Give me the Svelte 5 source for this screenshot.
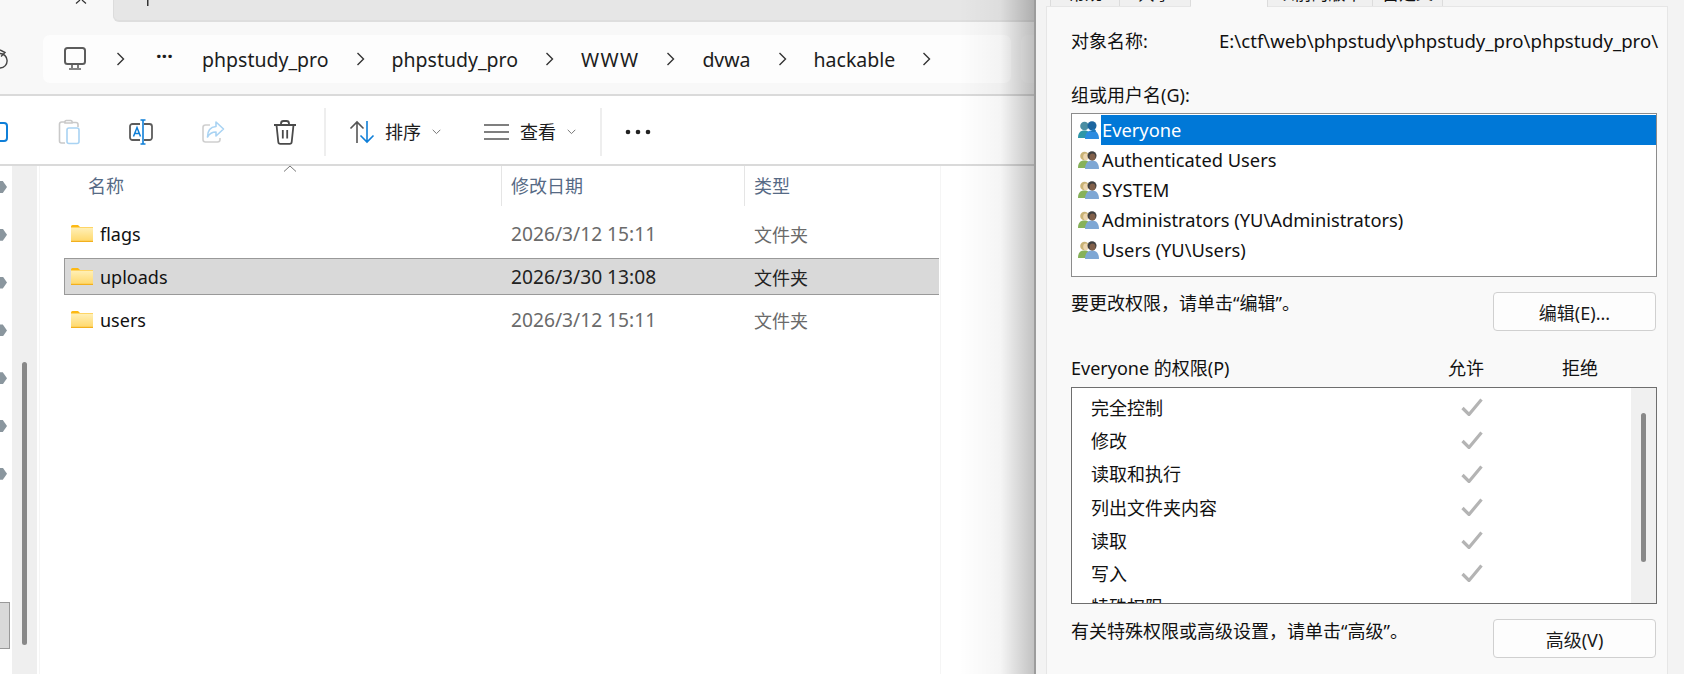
<script>
  const crumbs = [
    { label: 'phpstudy_pro', ls: 0 },
    { label: 'phpstudy_pro', ls: 0 },
    { label: 'WWW', ls: 1.3 },
    { label: 'dvwa', ls: 0 },
    { label: 'hackable', ls: 0 }
  ];
  const files = [
    { name: 'flags', date: '2026/3/12 15:11' },
    { name: 'uploads', date: '2026/3/30 13:08', selected: true },
    { name: 'users', date: '2026/3/12 15:11' }
  ];
  const navTips = [0, 1, 2, 3, 4, 5, 6];
  const tabs = [
    { label: '常规', w: 70 },
    { label: '共享', w: 71 },
    { label: '安全', w: 77, active: true },
    { label: '以前的版本', w: 105 },
    { label: '自定义', w: 70 }
  ];
  const users = [
    { name: 'Everyone', selected: true },
    { name: 'Authenticated Users' },
    { name: 'SYSTEM' },
    { name: 'Administrators (YU\\Administrators)' },
    { name: 'Users (YU\\Users)' }
  ];
  const perms = [
    { name: '完全控制', ok: true },
    { name: '修改', ok: true },
    { name: '读取和执行', ok: true },
    { name: '列出文件夹内容', ok: true },
    { name: '读取', ok: true },
    { name: '写入', ok: true },
    { name: '特殊权限' }
  ];
</script>

<div class="root">
  <section class="explorer">
    <div class="titlebar">
      <svg class="close" width="12" height="4" viewBox="0 0 12 4"><path d="M1 3.500 5 0M11 3.500 7 0" fill="none" stroke="#333" stroke-width="1.200"/></svg>
      <div class="strip">
        <svg class="plus" width="2" height="6" viewBox="0 0 2 6"><rect width="1.500" height="6" fill="#333"/></svg>
      </div>
    </div>

    <div class="address">
      <svg class="refresh" width="8" height="22" viewBox="0 0 8 22"><path d="M0 4.500A7 7 0 0 1 7 11 7 7 0 0 1 0 19M0 1 5 3.500 1 7.500" fill="none" stroke="#444" stroke-width="1.400"/></svg>
      <div class="bar">
        <svg class="monitor" width="24" height="24" viewBox="0 0 24 24"><rect x="2" y="1" width="20" height="16" rx="2.500" fill="none" stroke="#5c5c5c" stroke-width="2"/><path d="M9 17.500V21M15 17.500V21M6 22h12" fill="none" stroke="#5c5c5c" stroke-width="1.600"/></svg>
        <svg class="chev" width="9" height="16" viewBox="0 0 9 16"><path d="M1.500 2 7.500 8 1.500 14" fill="none" stroke="#333" stroke-width="1.400"/></svg>
        <span class="dots">···</span>
        {#each crumbs as c}
          <span class="crumb" style="letter-spacing:{c.ls}px">{c.label}</span>
          <svg class="chev" width="9" height="16" viewBox="0 0 9 16"><path d="M1.500 2 7.500 8 1.500 14" fill="none" stroke="#333" stroke-width="1.400"/></svg>
        {/each}
      </div>
      <div class="search"></div>
    </div>

    <div class="toolbar">
      <div class="tool">
        <svg width="24" height="24" viewBox="0 0 24 24"><rect x="2" y="3" width="20" height="18" rx="3" fill="none" stroke="#0f7fd8" stroke-width="2"/></svg>
      </div>
      <div class="tool">
        <svg width="24" height="26" viewBox="0 0 24 26"><path d="M8 3H4.500A2 2 0 0 0 2.500 5v17a2 2 0 0 0 2 2H8" fill="none" stroke="#c9c9c9" stroke-width="1.600"/><path d="M8 3.500A1.500 1.500 0 0 1 9.500 1.500h4A1.500 1.500 0 0 1 15 3.500V4H8zM15 3.500h4a2 2 0 0 1 2 2V8" fill="none" stroke="#c9c9c9" stroke-width="1.600"/><rect x="10" y="9" width="12" height="15.500" rx="2" fill="none" stroke="#a9d3f3" stroke-width="1.600"/></svg>
      </div>
      <div class="tool">
        <svg width="24" height="26" viewBox="0 0 24 26"><path d="M15 5h5.500a2.500 2.500 0 0 1 2.500 2.500v11a2.500 2.500 0 0 1-2.500 2.500H15M11 5H3.500A2.500 2.500 0 0 0 1 7.500v11A2.500 2.500 0 0 0 3.500 21H11" fill="none" stroke="#5c5c5c" stroke-width="1.800"/><path d="M4.500 17.500 8 8.500 11.500 17.500M5.800 14.500h4.500" fill="none" stroke="#0f7fd8" stroke-width="1.500"/><path d="M14 1v24M11.500 1h5M11.500 25h5" fill="none" stroke="#0f7fd8" stroke-width="1.600"/></svg>
      </div>
      <div class="tool">
        <svg width="24" height="26" viewBox="0 0 24 26"><path d="M9 6H4.500A2.500 2.500 0 0 0 2 8.500v12A2.500 2.500 0 0 0 4.500 23h12a2.500 2.500 0 0 0 2.500-2.500V19" fill="none" stroke="#cfcfcf" stroke-width="1.600"/><path d="M15 3l7.500 7-7.500 7v-4c-4 0-6.500 1.500-8.500 5 0-6 3-10 8.500-10.500z" fill="none" stroke="#a9d3f3" stroke-width="1.600" stroke-linejoin="round"/></svg>
      </div>
      <div class="tool">
        <svg width="24" height="26" viewBox="0 0 24 26"><path d="M1 6h22M8 6V4.500A2.500 2.500 0 0 1 10.500 2h3A2.500 2.500 0 0 1 16 4.500V6M3.500 6l1.800 17a2 2 0 0 0 2 1.800h9.400a2 2 0 0 0 2-1.800L20.500 6M9.800 11v8.500M14.200 11v8.500" fill="none" stroke="#4a4a4a" stroke-width="1.800"/></svg>
      </div>
      <i class="sep first"></i>
      <svg class="sort" width="26" height="26" viewBox="0 0 26 26"><path d="M8 24V3M1.500 9.500 8 3l6.500 6.500" fill="none" stroke="#555" stroke-width="1.600"/><path d="M18 2v21M11.500 16.500 18 23l6.500-6.500" fill="none" stroke="#0f7fd8" stroke-width="1.600"/></svg>
      <span class="tlabel sortl">排序</span>
      <svg class="down" width="9" height="6" viewBox="0 0 9 6"><path d="M.7.8 4.500 4.600 8.300.8" fill="none" stroke="#777" stroke-width="1"/></svg>
      <svg class="lines" width="25" height="18" viewBox="0 0 25 18"><path d="M0 2h25M0 9h25M0 16h25" stroke="#555" stroke-width="1.700"/></svg>
      <span class="tlabel viewl">查看</span>
      <svg class="down" width="9" height="6" viewBox="0 0 9 6"><path d="M.7.8 4.500 4.600 8.300.8" fill="none" stroke="#777" stroke-width="1"/></svg>
      <i class="sep second"></i>
      <svg class="more" width="26" height="6" viewBox="0 0 26 6"><circle cx="3" cy="3" r="2.300" fill="#222"/><circle cx="13" cy="3" r="2.300" fill="#222"/><circle cx="23" cy="3" r="2.300" fill="#222"/></svg>
    </div>

    <div class="body">
      <div class="nav">
        <div class="tips">
          {#each navTips as t (t)}
            <i class="tip"></i>
          {/each}
        </div>
        <div class="navsel"></div>
      </div>
      <div class="track"><i class="thumb"></i></div>
      <div class="list">
        <div class="head">
          <svg class="caret" width="14" height="7" viewBox="0 0 14 7"><path d="M1 6.500 7 1l6 5.500" fill="none" stroke="#777" stroke-width="1"/></svg>
          <span class="h name">名称</span>
          <span class="h date">修改日期</span>
          <span class="h type">类型</span>
        </div>
        {#each files as f}
          <div class="row" class:selected={f.selected}>
            <svg class="folder" width="22" height="17" viewBox="0 0 22 17">
              <defs><linearGradient id="fg" x1="0" y1="0" x2="0" y2="1"><stop offset="0" stop-color="#fff0b8"/><stop offset="1" stop-color="#ffd767"/></linearGradient></defs>
              <path d="M0 1.500A1.500 1.500 0 0 1 1.500 0H7l2 2h13v3H0z" fill="#fdb913"/>
              <rect y="2.500" width="22" height="14.500" fill="url(#fg)"/>
              <rect y="15.800" width="22" height="1.200" fill="#f2b01e"/>
            </svg>
            <span class="fname">{f.name}</span>
            <span class="fdate">{f.date}</span>
            <span class="ftype">文件夹</span>
          </div>
        {/each}
      </div>
    </div>
    <div class="shadow"></div>
  </section>

  <section class="dialog">
    <div class="tabs">
      {#each tabs as t}
        <div class="tab" class:active={t.active} style="width:{t.w}px"><span>{t.label}</span></div>
      {/each}
    </div>
    <div class="panel">
      <div class="objrow"><span class="objlabel">对象名称:</span><span class="objval">E:\ctf\web\phpstudy\phpstudy_pro\phpstudy_pro\</span></div>
      <div class="grouplabel">组或用户名(G):</div>
      <div class="userbox">
        {#each users as u}
          <div class="user">
            <svg width="21" height="18" viewBox="0 0 21 18">
              {#if u.selected}
                <path d="M0 17c0-5 2-7.500 6.500-7.500S12 12 12 17z" fill="#2e96a8"/>
                <circle cx="6.500" cy="5" r="4.300" fill="#4b8ea3"/>
                <path d="M7 18c0-6 3-8.500 7-8.500s7 2.500 7 8.500z" fill="#2c8be0"/>
                <circle cx="14" cy="4.800" r="4.500" fill="#1c659f"/>
                <path d="M15 7.500c3 1 3.500 2.500 2.500 3.500h-5z" fill="#1f78bd"/>
              {:else}
                <path d="M0 17c0-5 2-7.500 6.500-7.500S12 12 12 17z" fill="#86b15a"/>
                <circle cx="6.500" cy="5" r="4.300" fill="#c9b377"/>
                <ellipse cx="7.800" cy="5.800" rx="2.600" ry="3.400" fill="#ecd6b0"/>
                <path d="M7 18c0-6 3-8.500 7-8.500s7 2.500 7 8.500z" fill="#7ea7d4"/>
                <circle cx="14" cy="4.800" r="4.500" fill="#3f3f3f"/>
                <ellipse cx="14.500" cy="6" rx="3" ry="3.500" fill="#80604a"/>
              {/if}
            </svg>
            <span class="uname" class:sel={u.selected}>{u.name}</span>
          </div>
        {/each}
      </div>
      <div class="actionrow edit"><span>要更改权限，请单击“编辑”。</span><button>编辑(E)...</button></div>
      <div class="permhead"><span class="ph1">Everyone 的权限(P)</span><span class="ph2">允许</span><span class="ph3">拒绝</span></div>
      <div class="permbox">
        <div class="permrows">
          {#each perms as p}
            <div class="perm">
              <span class="pname">{p.name}</span>
              {#if p.ok}
                <svg width="22" height="18" viewBox="0 0 22 18"><path d="M1.500 10l6.500 6.500L20.500 1.500" fill="none" stroke="#b4b4b4" stroke-width="3.200"/></svg>
              {/if}
            </div>
          {/each}
        </div>
        <div class="ptrack"><i class="pthumb"></i></div>
      </div>
      <div class="actionrow adv"><span>有关特殊权限或高级设置，请单击“高级”。</span><button>高级(V)</button></div>
    </div>
  </section>
</div>

<style>
  :global(body) { margin: 0; }
  .root {
    width: 1684px; height: 674px; display: flex; overflow: hidden; background: #fff;
    font-family: "Noto Sans", "Noto Sans CJK SC", sans-serif; font-size: 18px; color: #111;
  }
  .explorer { width: 1034px; flex: none; display: flex; flex-direction: column; position: relative; background: #fff; overflow: hidden; }
  .titlebar { height: 22px; flex: none; display: flex; background: #f8f8f8; position: relative; }
  .close { position: absolute; left: 75px; top: 0; }
  .strip { flex: 1; margin-left: 113px; background: #e6e6e6; border-left: 1px solid #dcdcdc; border-bottom: 2px solid #dedede; border-bottom-left-radius: 6px; box-sizing: border-box; padding-left: 33px; }
  .plus { display: block; }
  .address { height: 72px; flex: none; box-sizing: border-box; background: #f8f8f8; padding-top: 13px; display: flex; align-items: flex-start; }
  .refresh { flex: none; margin-top: 14px; margin-right: 35px; }
  .bar { width: 968px; height: 48px; flex: none; background: #fdfdfd; border-radius: 7px; display: flex; align-items: center; box-sizing: border-box; padding-left: 20px; font-size: 19.5px; color: #1c1c1c; }
  .monitor { margin-right: 29px; flex: none; }
  .chev { flex: none; }
  .dots { width: 46px; margin-left: 31px; font-weight: 700; line-height: 1; position: relative; top: -3px; font-size: 20px; }
  .crumb { margin-left: 0; margin-right: 27px; }
  .chev + .crumb { margin-left: 27px; }
  .search { width: 40px; height: 48px; margin-left: 10px; background: #fbfbfb; border-radius: 7px; flex: none; }
  .toolbar { height: 72px; flex: none; box-sizing: border-box; border-top: 2px solid #dadada; border-bottom: 2px solid #dadada; padding-top: 4px; display: flex; align-items: center; margin-left: -39px; }
  .tool { width: 72px; flex: none; display: flex; justify-content: center; }
  .tool svg { display: block; }
  .sep { width: 2px; height: 48px; background: #eeeeee; flex: none; }
  .sep.first { margin-left: 3px; }
  .sort { margin-left: 23px; flex: none; }
  .tlabel { margin-left: 10px; flex: none; color: #1c1c1c; line-height: 1; }
  .sortl + .down { margin-left: 11px; }
  .down { flex: none; }
  .lines { margin-left: 43px; flex: none; }
  .tlabel.viewl { margin-left: 11px; }
  .viewl + .down { margin-left: 11px; }
  .sep.second { margin-left: 24px; }
  .more { margin-left: 23px; flex: none; }
  .body { flex: 1; display: flex; min-height: 0; }
  .nav { width: 12px; flex: none; display: flex; flex-direction: column; }
  .tips { display: flex; flex-direction: column; gap: 35.800px; padding-top: 15px; }
  .tip { display: block; width: 7px; height: 12px; background: #8a969e; clip-path: polygon(0 0, 40% 0, 100% 50%, 40% 100%, 0 100%); }
  .navsel { width: 10px; height: 47px; box-sizing: border-box; margin-top: 122px; background: #d9d9d9; border: 1px solid #999; border-left: 0; }
  .track { width: 25px; flex: none; background: #efefef; display: flex; justify-content: center; align-items: flex-start; }
  .thumb { display: block; width: 5px; height: 283px; margin-top: 196px; border-radius: 3px; background: #888; margin-right: 0; }
  .list { width: 902px; flex: none; margin-left: 2px; border-left: 1px solid #f5f5f5; border-right: 1px solid #f5f5f5; box-sizing: border-box; }
  .head { height: 49px; position: relative; }
  .caret { position: absolute; left: 243px; top: -1px; }
  .h { position: absolute; top: 6px; line-height: 28px; color: #566a85; font-size: 18px; }
  .h.name { left: 48px; }
  .h.date { left: 471px; padding-left: 0; }
  .h.type { left: 714px; }
  .h.date::before, .h.type::before { content: ''; position: absolute; left: -10px; top: -6px; width: 1px; height: 40px; background: #e5e5e5; }
  .row { width: 875px; height: 37px; margin: 0 0 6px 24px; box-sizing: border-box; border: 1px solid transparent; border-right: 0; display: flex; align-items: center; padding-left: 6px; color: #111; }
  .row.selected { background: #d9d9d9; border-color: #999; }
  .folder { flex: none; }
  .fname { margin-left: 7px; width: 411px; flex: none; }
  .fdate { width: 243px; flex: none; color: #6a6a6a; font-size: 19.200px; }
  .ftype { color: #6a6a6a; }
  .row.selected .fdate, .row.selected .ftype { color: #222; }
  .shadow { position: absolute; top: 0; bottom: 0; right: 0; width: 75px; background: linear-gradient(to right, rgba(0,0,0,0), rgba(0,0,0,.04) 55%, rgba(0,0,0,.24)); pointer-events: none; }

  .dialog { flex: 1; box-sizing: border-box; border-left: 2px solid #9c9c9c; background: #f3f3f3; display: flex; flex-direction: column; padding-left: 10px; padding-right: 16px; overflow: hidden; }
  .tabs { height: 6px; flex: none; display: flex; padding-left: 4px; box-sizing: border-box; position: relative; z-index: 1; }
  .tab { height: 6px; box-sizing: border-box; border-right: 1px solid #dcdcdc; overflow: hidden; display: flex; justify-content: center; align-items: flex-end; background: #f0f0f0; }
  .tab:first-child { border-left: 1px solid #dcdcdc; }
  .tab span { display: block; line-height: 18px; font-size: 17px; margin-bottom: 3.500px; height: 18px; flex: none; color: #111; }
  .tab.active { background: #f9f9f9; height: 7px; }
  .tab.active span { visibility: hidden; }
  .panel { flex: 1; background: #f9f9f9; border: 1px solid #e6e6e6; border-bottom: 0; box-sizing: border-box; padding-left: 24px; }
  .objrow { display: flex; height: 36px; padding-top: 16px; line-height: 36px; box-sizing: content-box; }
  .objlabel { width: 148px; flex: none; }
  .objval { white-space: nowrap; font-size: 18.600px; }
  .grouplabel { margin-top: 22px; line-height: 28px; }
  .userbox { width: 586px; height: 164px; margin-top: 4px; box-sizing: border-box; border: 1px solid #8c8c8c; background: #fff; padding: 1px 0 0 6px; }
  .user { height: 30px; display: flex; align-items: center; }
  .user svg { flex: none; }
  .uname { margin-left: 2px; flex: 1; height: 30px; line-height: 30px; padding-left: 1px; font-size: 18.300px; }
  .uname.sel { background: #0078d7; color: #fff; margin-right: 0; }
  .actionrow { display: flex; justify-content: space-between; width: 585px; }
  .actionrow span { line-height: 28px; }
  .actionrow.edit { margin-top: 15px; height: 39px; }
  .actionrow.edit span { margin-top: -3px; }
  .actionrow.adv span { margin-top: -2px; }
  button { width: 163px; height: 39px; flex: none; box-sizing: border-box; background: #fdfdfd; border: 1px solid #d0d0d0; border-radius: 4px; font: inherit; color: #1a1a1a; padding: 0; }
  .permhead { position: relative; height: 28px; margin-top: 23px; line-height: 28px; }
  .ph2 { position: absolute; left: 377px; }
  .ph3 { position: absolute; left: 491px; }
  .permbox { width: 586px; height: 217px; margin-top: 5px; box-sizing: border-box; border: 1px solid #6e6e6e; background: #fff; display: flex; overflow: hidden; }
  .permrows { flex: 1; padding: 2px 0 0 19px; }
  .perm { height: 33.300px; display: flex; align-items: center; position: relative; }
  .perm svg { position: absolute; left: 370px; top: 8px; }
  .ptrack { width: 25px; flex: none; background: #f0f0f0; display: flex; justify-content: center; align-items: flex-start; }
  .pthumb { display: block; width: 5px; height: 149px; margin-top: 25px; border-radius: 3px; background: #888; }
  .actionrow.adv { margin-top: 15px; height: 39px; }
</style>
